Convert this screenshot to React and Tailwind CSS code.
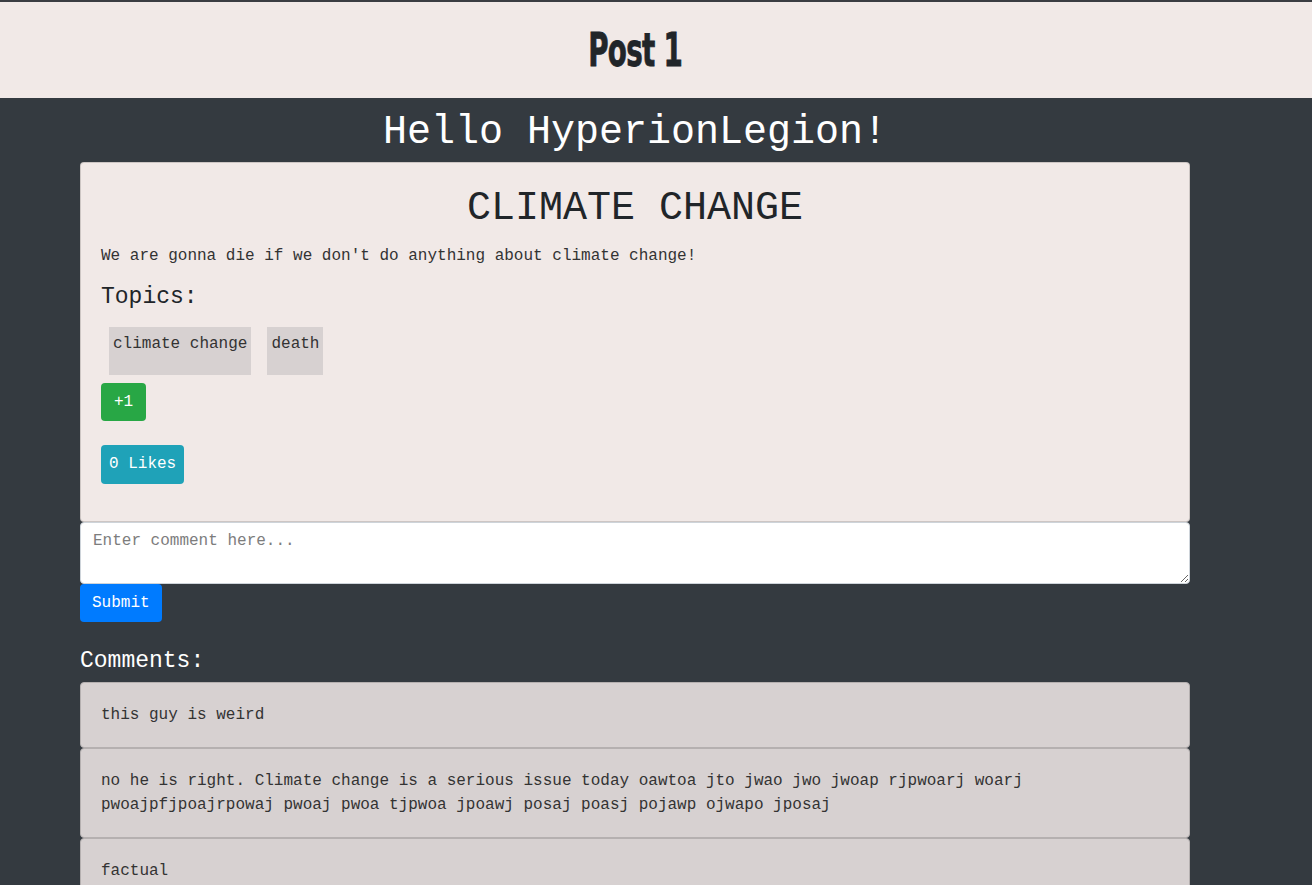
import React from 'react';

const mono = { fontFamily: '"Liberation Mono", "Courier New", monospace' };

const comments = [
  'this guy is weird',
  'no he is right. Climate change is a serious issue today oawtoa jto jwao jwo jwoap rjpwoarj woarj pwoajpfjpoajrpowaj pwoaj pwoa tjpwoa jpoawj posaj poasj pojawp ojwapo jposaj',
  'factual',
];

const Topic = ({ label }) => (
  <span className="mx-2 inline-block h-[48px] bg-[#d7d1d1] px-1 pt-[5px] text-[16px] leading-6 text-[#333]">
    {label}
  </span>
);

const App = () => {
  return (
    <div className="min-h-screen bg-[#343a40]" style={mono}>
      <header className="border-t-2 border-[#3a3d42] bg-[#f1e9e7]">
        <div className="flex h-[96px] w-[1270px] items-center justify-center">
          <h1
            className="inline-block scale-x-[0.67] text-[46px] font-bold leading-none tracking-[-1px] text-[#212529] [-webkit-text-stroke:0.8px_#212529]"
            style={{ fontFamily: '"Liberation Sans Narrow", "DejaVu Sans Condensed", "Liberation Sans", sans-serif' }}
          >
            Post 1
          </h1>
        </div>
      </header>

      <main className="ml-[80px] w-[1110px] pb-10">
        <h2 className="mt-[11px] mb-[5px] text-center text-[40px] leading-[1.2] text-white">Hello HyperionLegion!</h2>

        <div className="rounded border border-black/15 bg-[#f1e9e7] px-5 pt-5 pb-[37px] text-[#212529]">
          <h3 className="mb-[11px] pt-[2px] text-center text-[40px] leading-[1.2]">CLIMATE CHANGE</h3>
          <p className="mb-4 text-[16px] leading-6 text-[#333]">
            We are gonna die if we don't do anything about climate change!
          </p>
          <h4 className="mb-[15px] text-[23px] leading-[1.2]">Topics:</h4>
          <div className="flex">
            <Topic label="climate change" />
            <Topic label="death" />
          </div>
          <button className="mt-2 block rounded bg-[#28a745] px-[13px] py-[7px] text-[16px] leading-6 text-white">+1</button>
          <button className="mt-6 block rounded bg-[#1fa2b8] px-2 pt-[7px] pb-[8px] text-[16px] leading-6 text-white">0 Likes</button>
        </div>

        <textarea
          placeholder="Enter comment here..."
          className="block h-[62px] w-full rounded border border-[#ced4da] bg-white px-3 py-[6px] text-[16px] leading-6 text-[#495057] placeholder:text-[#7d7d7d]"
          style={mono}
        />
        <button className="block rounded bg-[#007bff] px-3 py-[7px] text-[16px] leading-6 text-white">Submit</button>

        <h4 className="mt-[26px] mb-[7px] text-[23px] leading-[1.2] text-white">Comments:</h4>
        <div>
          {comments.map((c) => (
            <div key={c} className="rounded border border-[#b5b0b0] bg-[#d7d1d1] p-5 text-[16px] leading-6 text-[#333]">
              {c}
            </div>
          ))}
        </div>
      </main>
    </div>
  );
};

export default App;
